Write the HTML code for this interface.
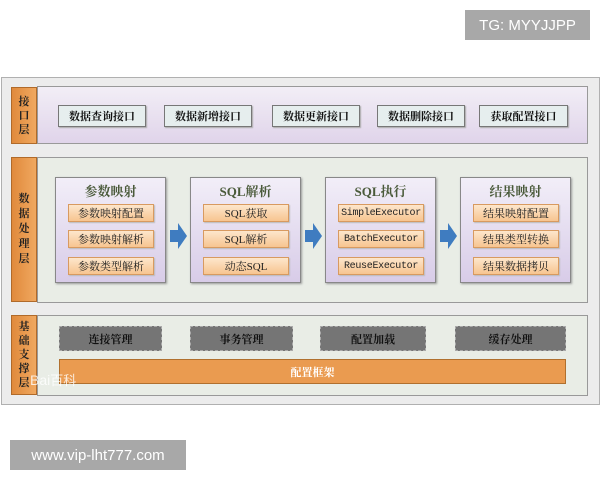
<!DOCTYPE html><html><head><meta charset="utf-8"><style>
*{margin:0;padding:0;box-sizing:border-box}
body{width:600px;height:480px;background:#fff;position:relative;overflow:hidden;font-family:"Liberation Serif","Noto Serif CJK SC",serif}
.a{position:absolute}
.frame{left:1px;top:77px;width:599px;height:328px;background:#ececec;border:1px solid #b0b0b0}
.lab{background:linear-gradient(90deg,#e08a3c,#f0a860);border:1px solid #b06a2a;color:#222;font-weight:bold;font-size:11px;display:flex;flex-direction:column;align-items:center;justify-content:center;line-height:14px}
.ib{background:#e6eeee;border:1px solid #777;box-shadow:1px 1px 1px #aaa;font-size:11px;font-weight:bold;display:flex;align-items:center;justify-content:center;color:#111}
.grp{background:linear-gradient(#f2eef8,#d8cce8);border:1px solid #888;box-shadow:1px 1px 2px #999;width:111px;height:106px;top:177px}
.grp h{display:block;text-align:center;font-weight:bold;color:#4a5a3a;font-size:13px;margin-top:3px}
.it{position:absolute;left:12px;width:86px;height:18px;background:linear-gradient(#fde6cc,#f7c590);border:1px solid #d89a60;box-shadow:1px 1px 1px #bbb;font-size:11px;display:flex;align-items:center;justify-content:center;color:#222}
.m{font-family:"Liberation Mono",monospace;font-size:10px;letter-spacing:-0.3px}
.arr{width:0;height:0;border-top:13px solid transparent;border-bottom:13px solid transparent;border-left:9px solid #3f7cc0;top:223px}
.ab{width:8px;height:12px;background:#3f7cc0;top:230px}
.gb{background:#757575;border:1px dashed #aaa;top:326px;height:25px;font-size:11px;font-weight:bold;color:#111;display:flex;align-items:center;justify-content:center}
.wm{background:#a8a8a8;color:#fff;font-family:"Liberation Sans",sans-serif;font-size:15px;display:flex;align-items:center;justify-content:center}
</style></head><body>
<div class="a wm" style="left:465px;top:10px;width:125px;height:30px">TG: MYYJJPP</div>
<div class="a frame"></div>
<div class="a lab" style="left:11px;top:87px;width:26px;height:57px"><span>接</span><span>口</span><span>层</span></div>
<div class="a" style="left:37px;top:86px;width:551px;height:58px;background:linear-gradient(#f2eef6,#e0d4ea);border:1px solid #999"></div>
<div class="a ib" style="left:58px;top:105px;width:88px;height:22px">数据查询接口</div>
<div class="a ib" style="left:164px;top:105px;width:88px;height:22px">数据新增接口</div>
<div class="a ib" style="left:272px;top:105px;width:88px;height:22px">数据更新接口</div>
<div class="a ib" style="left:377px;top:105px;width:88px;height:22px">数据删除接口</div>
<div class="a ib" style="left:479px;top:105px;width:89px;height:22px">获取配置接口</div>

<div class="a lab" style="left:11px;top:157px;width:26px;height:145px;line-height:15px"><span>数</span><span>据</span><span>处</span><span>理</span><span>层</span></div>
<div class="a" style="left:37px;top:157px;width:551px;height:146px;background:#e9ede6;border:1px solid #999"></div>
<div class="a grp" style="left:55px"><h>参数映射</h><div class="it" style="top:26px">参数映射配置</div><div class="it" style="top:52px">参数映射解析</div><div class="it" style="top:79px">参数类型解析</div></div>
<div class="a grp" style="left:190px"><h>SQL解析</h><div class="it" style="top:26px">SQL获取</div><div class="it" style="top:52px">SQL解析</div><div class="it" style="top:79px">动态SQL</div></div>
<div class="a grp" style="left:325px"><h>SQL执行</h><div class="it m" style="top:26px">SimpleExecutor</div><div class="it m" style="top:52px">BatchExecutor</div><div class="it m" style="top:79px">ReuseExecutor</div></div>
<div class="a grp" style="left:460px"><h>结果映射</h><div class="it" style="top:26px">结果映射配置</div><div class="it" style="top:52px">结果类型转换</div><div class="it" style="top:79px">结果数据拷贝</div></div>
<div class="a ab" style="left:170px"></div><div class="a arr" style="left:178px"></div>
<div class="a ab" style="left:305px"></div><div class="a arr" style="left:313px"></div>
<div class="a ab" style="left:440px"></div><div class="a arr" style="left:448px"></div>

<div class="a lab" style="left:11px;top:315px;width:26px;height:80px;line-height:14px"><span>基</span><span>础</span><span>支</span><span>撑</span><span>层</span></div>
<div class="a" style="left:37px;top:315px;width:551px;height:81px;background:#e9ede6;border:1px solid #999"></div>
<div class="a gb" style="left:59px;width:103px">连接管理</div>
<div class="a gb" style="left:190px;width:103px">事务管理</div>
<div class="a gb" style="left:320px;width:106px">配置加载</div>
<div class="a gb" style="left:455px;width:111px">缓存处理</div>
<div class="a" style="left:59px;top:359px;width:507px;height:25px;background:#ea9b50;border:1px solid #b0702e;color:#fff;font-size:11px;font-weight:bold;display:flex;align-items:center;justify-content:center">配置框架</div>
<div class="a" style="left:30px;top:370px;color:rgba(255,255,255,.8);font-family:'Liberation Sans',sans-serif;font-size:14px">Bai<span style="font-size:13px">百科</span></div>
<div class="a wm" style="left:10px;top:440px;width:176px;height:30px">www.vip-lht777.com</div>
</body></html>
